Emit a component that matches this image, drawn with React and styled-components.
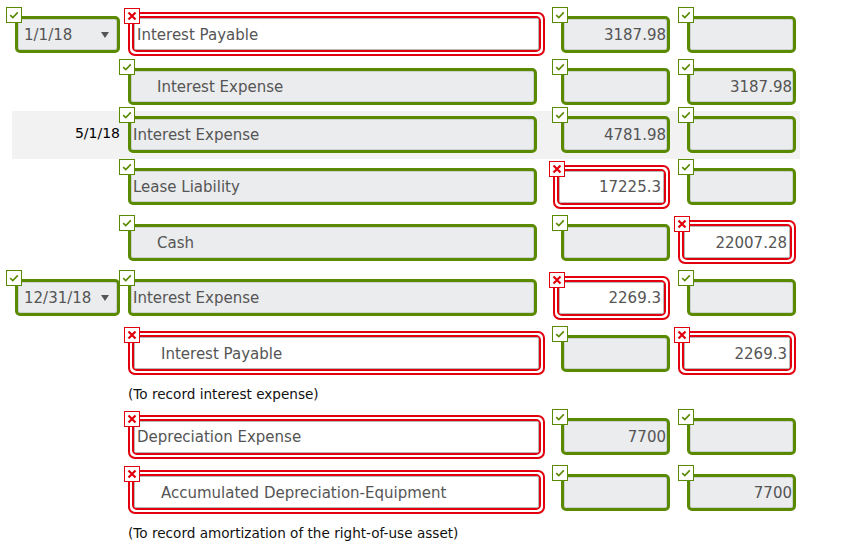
import React from 'react';
import styled, { createGlobalStyle } from 'styled-components';

const GREEN = '#5a8a00';
const RED = '#e2000e';

const GlobalStyle = createGlobalStyle`
  html, body { margin: 0; padding: 0; background: #fff; }
  body { font-family: "DejaVu Sans", Verdana, sans-serif; }
`;

const Page = styled.div`
  padding: 6.5px 0 0 12px;
  width: 788px;
`;

const Row = styled.div`
  display: grid;
  grid-template-columns: 116px 417px 125px 126px;
  align-items: center;
  padding: 5.75px 0;
  background: ${p => (p.$shaded ? '#f2f2f2' : 'transparent')};
`;

const Cell = styled.div`
  display: flex;
  justify-content: ${p => (p.$end ? 'flex-end' : 'flex-start')};
`;

const GreenBox = styled.div`
  position: relative;
  box-sizing: border-box;
  width: ${p => p.$w}px;
  height: 37px;
  border: 3px solid ${GREEN};
  border-radius: 5px;
  background: #ebecee;
  box-shadow: inset 0 0 0 1px #cfd0d3;
  display: flex;
  align-items: center;
  justify-content: ${p => (p.$right ? 'flex-end' : 'flex-start')};
  padding: ${p => (p.$right ? '1px 1px 0 0' : `1px 0 0 ${p.$indent ? 26 : 2}px`)};
  font-size: 15px;
  color: #555;
  white-space: nowrap;
`;

const RedFrame = styled.div`
  position: relative;
  box-sizing: border-box;
  width: ${p => p.$w}px;
  height: 44px;
  border: 2px solid ${RED};
  border-radius: 7px;
  padding: 2px;
  background: #fff;
`;

const RedRing = styled.div`
  box-sizing: border-box;
  height: 100%;
  border: 2px solid ${RED};
  border-radius: 5px;
`;

const RedInput = styled.div`
  box-sizing: border-box;
  height: 100%;
  border: 1px solid #b8b8b8;
  border-radius: 2px;
  background: #fff;
  display: flex;
  align-items: center;
  justify-content: ${p => (p.$right ? 'flex-end' : 'flex-start')};
  padding: ${p => (p.$right ? '1px 2px 0 0' : `1px 0 0 ${p.$indent ? 26 : 2}px`)};
  font-size: 15px;
  color: #555;
  white-space: nowrap;
`;

const Badge = styled.span`
  position: absolute;
  top: ${p => (p.$bad ? '-6px' : '-12px')};
  left: ${p => (p.$bad ? '-6px' : '-12px')};
  box-sizing: border-box;
  width: 16px;
  height: 16px;
  border: 1px solid ${p => (p.$bad ? RED : GREEN)};
  background: #fff;
  display: flex;
  align-items: center;
  justify-content: center;
  z-index: 2;
`;

const DateSelect = styled(GreenBox)`
  margin-left: 3px;
  justify-content: space-between;
  padding: 1px 8px 0 6px;
`;

const DateLabel = styled.div`
  justify-self: end;
  padding-right: 8px;
  margin-bottom: 4px;
  font-size: 14px;
  color: #000;
`;

const Note = styled.div`
  padding-left: 116px;
  margin: 5px 0 6px;
  font-size: 13.6px;
  line-height: 17px;
  color: #111;
`;

const Check = () => (
  <svg width="10" height="8" viewBox="0 0 10 8">
    <polyline points="1.2,4.2 3.8,6.6 8.8,1.4" fill="none" stroke={GREEN} strokeWidth="1.6" />
  </svg>
);

const Cross = () => (
  <svg width="10" height="10" viewBox="0 0 10 10">
    <path d="M1.5 1.5 L8.5 8.5 M8.5 1.5 L1.5 8.5" stroke={RED} strokeWidth="2.2" />
  </svg>
);

const Mark = ({ bad }) => <Badge $bad={bad}>{bad ? <Cross /> : <Check />}</Badge>;

const WIDTHS = {
  account: { ok: 409, bad: 417 },
  debit: { ok: 109, bad: 117 },
  credit: { ok: 109, bad: 118 },
};

const Field = ({ kind, bad, text, indent }) => {
  const right = kind !== 'account';
  const w = WIDTHS[kind][bad ? 'bad' : 'ok'];
  if (bad) {
    return (
      <RedFrame $w={w}>
        <Mark bad />
        <RedRing>
          <RedInput $right={right} $indent={indent}>{text}</RedInput>
        </RedRing>
      </RedFrame>
    );
  }
  return (
    <GreenBox $w={w} $right={right} $indent={indent}>
      <Mark />
      {text}
    </GreenBox>
  );
};

const Arrow = () => (
  <svg width="8" height="6" viewBox="0 0 8 6">
    <polygon points="0,0 8,0 4,6" fill="#555" />
  </svg>
);

const rows = [
  { select: '1/1/18', acc: ['Interest Payable', true, false], dr: ['3187.98', false], cr: ['', false] },
  { acc: ['Interest Expense', false, true], dr: ['', false], cr: ['3187.98', false] },
  { label: '5/1/18', shaded: true, acc: ['Interest Expense', false, false], dr: ['4781.98', false], cr: ['', false] },
  { acc: ['Lease Liability', false, false], dr: ['17225.3', true], cr: ['', false] },
  { acc: ['Cash', false, true], dr: ['', false], cr: ['22007.28', true] },
  { select: '12/31/18', acc: ['Interest Expense', false, false], dr: ['2269.3', true], cr: ['', false] },
  { acc: ['Interest Payable', true, true], dr: ['', false], cr: ['2269.3', true], note: '(To record interest expense)' },
  { acc: ['Depreciation Expense', true, false], dr: ['7700', false], cr: ['', false] },
  { acc: ['Accumulated Depreciation-Equipment', true, true], dr: ['', false], cr: ['7700', false], note: '(To record amortization of the right-of-use asset)' },
];

export default function App() {
  return (
    <>
      <GlobalStyle />
      <Page>
        {rows.map((r, i) => (
          <React.Fragment key={i}>
            <Row $shaded={r.shaded}>
              {r.select ? (
                <Cell>
                  <DateSelect $w={105}>
                    <Mark />
                    <span>{r.select}</span>
                    <Arrow />
                  </DateSelect>
                </Cell>
              ) : r.label ? (
                <DateLabel>{r.label}</DateLabel>
              ) : (
                <Cell />
              )}
              <Cell>
                <Field kind="account" text={r.acc[0]} bad={r.acc[1]} indent={r.acc[2]} />
              </Cell>
              <Cell $end>
                <Field kind="debit" text={r.dr[0]} bad={r.dr[1]} />
              </Cell>
              <Cell $end>
                <Field kind="credit" text={r.cr[0]} bad={r.cr[1]} />
              </Cell>
            </Row>
            {r.note && <Note>{r.note}</Note>}
          </React.Fragment>
        ))}
      </Page>
    </>
  );
}
